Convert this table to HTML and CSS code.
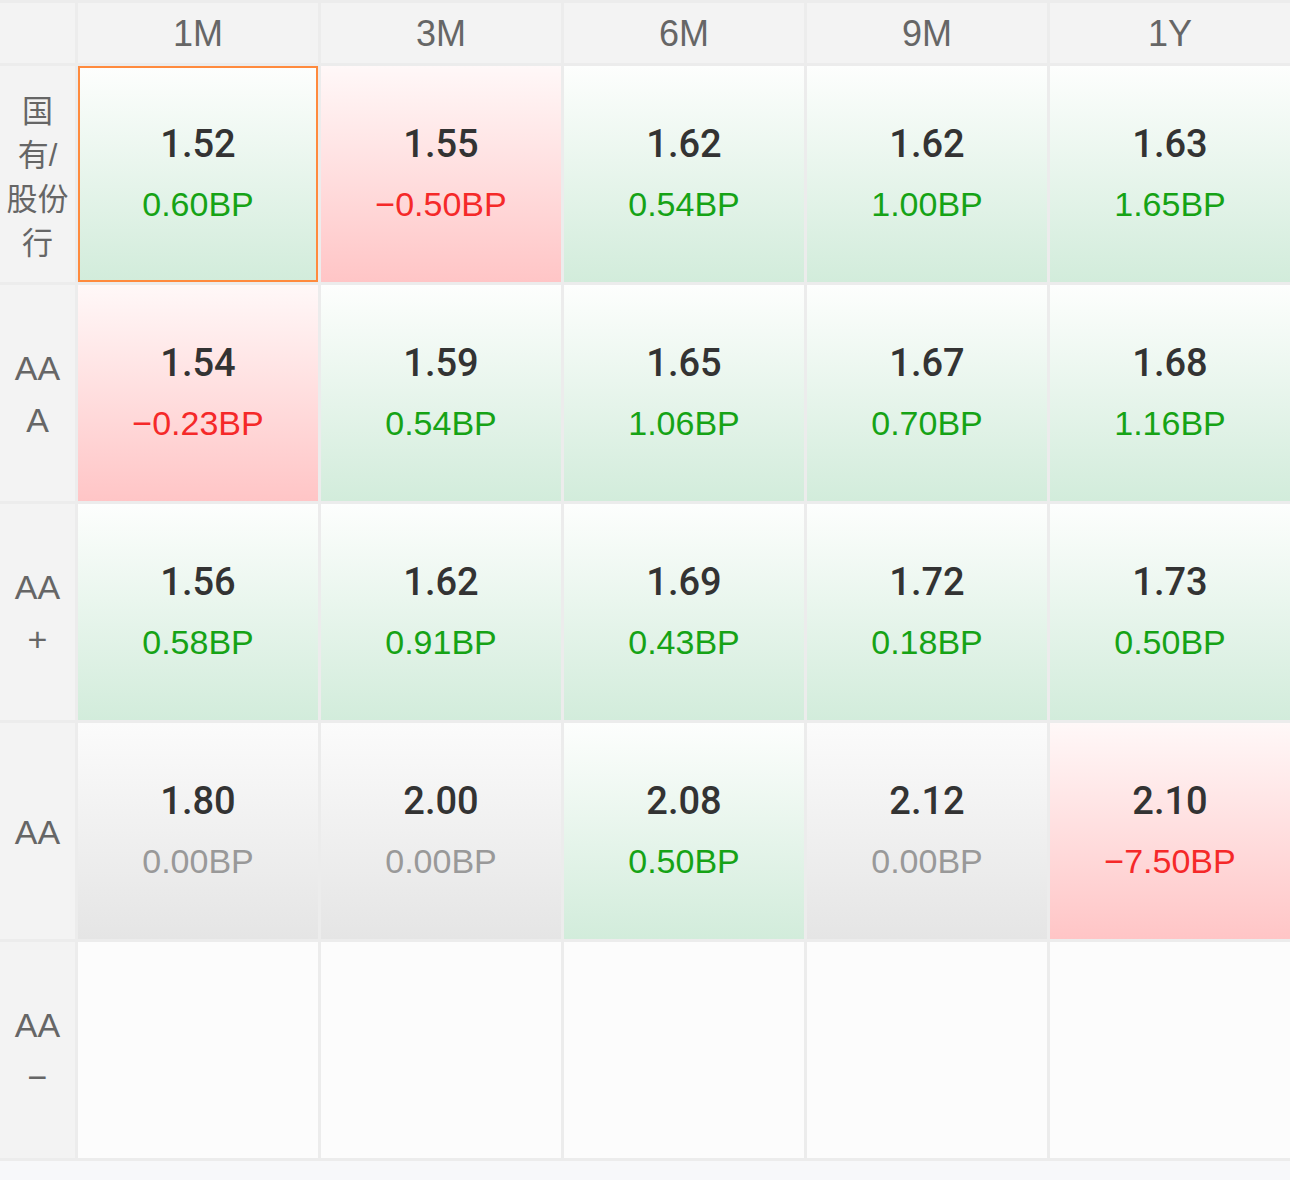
FILE: index.html
```html
<!DOCTYPE html>
<html lang="zh-CN">
<head>
    <meta charset="UTF-8">
    <meta name="viewport" content="width=device-width, initial-scale=1.0">
    <title>同业存单收益率</title>
    <link rel="stylesheet" href="styles.css">
</head>
<body>
    <div class="matrix">
        <div class="corner"></div>
        <div class="term">1M</div>
        <div class="term">3M</div>
        <div class="term">6M</div>
        <div class="term">9M</div>
        <div class="term">1Y</div>

        <div class="rating rating-cn">国<br>有/<br>股份<br>行</div>
        <div class="cell up selected"><span class="rate">1.52</span><span class="bp">0.60BP</span></div>
        <div class="cell down"><span class="rate">1.55</span><span class="bp">−0.50BP</span></div>
        <div class="cell up"><span class="rate">1.62</span><span class="bp">0.54BP</span></div>
        <div class="cell up"><span class="rate">1.62</span><span class="bp">1.00BP</span></div>
        <div class="cell up"><span class="rate">1.63</span><span class="bp">1.65BP</span></div>

        <div class="rating">AA<br>A</div>
        <div class="cell down"><span class="rate">1.54</span><span class="bp">−0.23BP</span></div>
        <div class="cell up"><span class="rate">1.59</span><span class="bp">0.54BP</span></div>
        <div class="cell up"><span class="rate">1.65</span><span class="bp">1.06BP</span></div>
        <div class="cell up"><span class="rate">1.67</span><span class="bp">0.70BP</span></div>
        <div class="cell up"><span class="rate">1.68</span><span class="bp">1.16BP</span></div>

        <div class="rating">AA<br>+</div>
        <div class="cell up"><span class="rate">1.56</span><span class="bp">0.58BP</span></div>
        <div class="cell up"><span class="rate">1.62</span><span class="bp">0.91BP</span></div>
        <div class="cell up"><span class="rate">1.69</span><span class="bp">0.43BP</span></div>
        <div class="cell up"><span class="rate">1.72</span><span class="bp">0.18BP</span></div>
        <div class="cell up"><span class="rate">1.73</span><span class="bp">0.50BP</span></div>

        <div class="rating">AA</div>
        <div class="cell flat"><span class="rate">1.80</span><span class="bp">0.00BP</span></div>
        <div class="cell flat"><span class="rate">2.00</span><span class="bp">0.00BP</span></div>
        <div class="cell up"><span class="rate">2.08</span><span class="bp">0.50BP</span></div>
        <div class="cell flat"><span class="rate">2.12</span><span class="bp">0.00BP</span></div>
        <div class="cell down"><span class="rate">2.10</span><span class="bp">−7.50BP</span></div>

        <div class="rating">AA<br>−</div>
        <div class="cell empty"></div>
        <div class="cell empty"></div>
        <div class="cell empty"></div>
        <div class="cell empty"></div>
        <div class="cell empty"></div>
    </div>
</body>
</html>
```

FILE: styles.css
```css
* {
    margin: 0;
    padding: 0;
    box-sizing: border-box;
}

body {
    background-color: #f7f8fa;
    font-family: 'Liberation Sans', 'Noto Sans CJK SC', sans-serif;
    color: #333;
}

.matrix {
    display: grid;
    grid-template-columns: 75px repeat(5, 1fr);
    grid-template-rows: 60px repeat(5, 216px);
    gap: 3px;
    padding: 3px 0;
    background-color: #ececec;
}

.corner,
.term,
.rating {
    background-color: #f3f3f3;
    color: #666;
    display: flex;
    align-items: center;
    justify-content: center;
    text-align: center;
}

.term {
    font-size: 36px;
    padding-top: 2px;
}

.rating {
    font-size: 34px;
    line-height: 52px;
    padding-top: 2px;
}

.rating-cn {
    font-size: 31px;
    line-height: 44px;
    padding-top: 8px;
}

.cell {
    display: flex;
    flex-direction: column;
    align-items: center;
    justify-content: center;
}

.cell .rate {
    font-family: Roboto, 'Liberation Sans', sans-serif;
    font-weight: 500;
    font-size: 38px;
    line-height: 60px;
    color: #333;
}

.cell .bp {
    font-size: 34px;
    line-height: 60px;
}

.up {
    background: linear-gradient(to bottom, #fdfefd, #d2ecdb);
}

.up .bp {
    color: #16a316;
}

.down {
    background: linear-gradient(to bottom, #fff8f8, #ffc5c6);
}

.down .bp {
    color: #f52929;
}

.flat {
    background: linear-gradient(to bottom, #fbfbfb, #e5e5e5);
}

.flat .bp {
    color: #999;
}

.empty {
    background-color: #fcfcfc;
}

.selected {
    border: 2px solid #ff8a3d;
}
```
